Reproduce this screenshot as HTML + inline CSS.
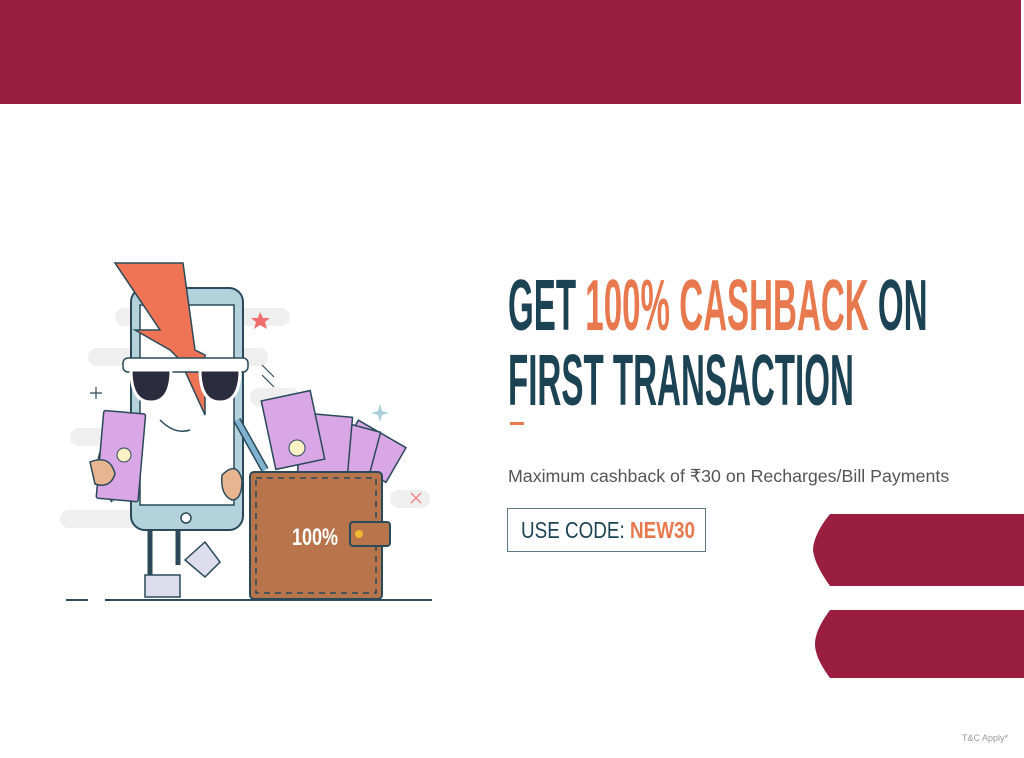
<!DOCTYPE html>
<html><head><meta charset="utf-8"><style>
body{margin:0;width:1024px;height:758px;background:#fff;position:relative;overflow:hidden;font-family:"Liberation Sans",sans-serif}
.top{position:absolute;left:0;top:0;width:1021px;height:104px;background:#991e40}
.h{position:absolute;left:508px;font-family:"Liberation Sans",sans-serif;font-weight:bold;font-size:72px;line-height:72px;color:#1c4354;transform-origin:0 0;white-space:nowrap;transform:scaleX(0.46)}
.o{color:#e8784d}
.sub{position:absolute;left:508px;top:466px;font-size:17.8px;color:#555;white-space:nowrap}
.code{position:absolute;left:507px;top:508px;width:197px;height:42px;border:1.5px solid #5d7a87;font-size:23px;line-height:42px;color:#1c4354;white-space:nowrap;overflow:hidden}
.code span.in{display:inline-block;transform:scaleX(0.82);transform-origin:0 0;margin-left:13px}
.tc{position:absolute;right:16px;top:733px;font-size:9px;color:#999}
</style></head><body>
<div class="top"></div>
<div class="h" style="top:270px">GET <span class="o">100% CASHBACK</span> ON</div>
<div class="h" style="top:345px">FIRST TRANSACTION</div>
<div style="position:absolute;left:510px;top:422px;width:14px;height:3px;background:#e8784d"></div>
<div class="sub">Maximum cashback of ₹30 on Recharges/Bill Payments</div>
<div class="code"><span class="in">USE CODE: <span style="color:#e8784d;font-weight:bold">NEW30</span></span></div>
<svg style="position:absolute;left:0;top:0" width="1024" height="758">
<path d="M830 514H1024V586H830C820 572 814 560 813 550C813 540 820 526 830 514Z" fill="#991e40"/>
<path d="M830 610H1024V678H830C821 666 815 654 815 644C815 634 821 622 830 610Z" fill="#991e40"/>
<g fill="#efefef">
<rect x="115" y="308" width="175" height="18" rx="9"/>
<rect x="88" y="348" width="180" height="18" rx="9"/>
<rect x="70" y="428" width="150" height="18" rx="9"/>
<rect x="60" y="510" width="180" height="18" rx="9"/>
<rect x="250" y="388" width="50" height="18" rx="9"/>
<rect x="390" y="490" width="40" height="18" rx="9"/>
</g>
<line x1="66" y1="600" x2="88" y2="600" stroke="#2a4a5a" stroke-width="2"/>
<line x1="105" y1="600" x2="432" y2="600" stroke="#2a4a5a" stroke-width="2"/>
<path d="M105 450 Q95 470 115 500" stroke="#2a4a5a" stroke-width="9" fill="none"/>
<path d="M105 450 Q95 470 115 500" stroke="#7fb3cf" stroke-width="6" fill="none"/>
<rect x="131" y="288" width="112" height="242" rx="14" fill="#b4d2dc" stroke="#2a4a5a" stroke-width="2"/>
<rect x="140" y="305" width="94" height="200" fill="#fff" stroke="#2a4a5a" stroke-width="1.5"/>
<circle cx="186" cy="518" r="5" fill="#fff" stroke="#2a4a5a" stroke-width="1.5"/>
<path d="M150 530V575M178 530V565" stroke="#2a4a5a" stroke-width="5"/>
<path d="M145 575h35v22h-35z" fill="#dde" stroke="#2a4a5a" stroke-width="1.5"/>
<path d="M185 560l20-18 15 20-15 15z" fill="#dde" stroke="#2a4a5a" stroke-width="1.5"/>
<path d="M115 263L183 263 195 350 205 355 205 415 180 360 170 350 135 330 160 330 Z" fill="#ee7455" stroke="#2a4a5a" stroke-width="1.5"/>
<rect x="123" y="358" width="125" height="14" rx="5" fill="#fff" stroke="#2a4a5a" stroke-width="1.5"/>
<path d="M131 370h40q0 32-20 32t-20-32zM200 370h40q0 32-20 32t-20-32z" fill="#2a2b3c" stroke="#fff" stroke-width="3"/>
<path d="M160 420q15 15 30 10" stroke="#2a4a5a" stroke-width="1.5" fill="none"/>
<path d="M237 420L265 470" stroke="#2a4a5a" stroke-width="8"/>
<path d="M237 420L265 470" stroke="#7fb3cf" stroke-width="5"/>
<rect x="100" y="412" width="42" height="88" rx="2" transform="rotate(5 120 455)" fill="#d9a6e6" stroke="#2a4a5a" stroke-width="1.5"/>
<circle cx="124" cy="455" r="7" fill="#fbf1c6" stroke="#2a4a5a"/>
<path d="M90 462q20 -8 25 12q-5 15 -20 10z" fill="#e8b591" stroke="#2a4a5a" stroke-width="1.5"/>
<path d="M222 475q15 -15 20 5q0 20 -10 20q-12 -5 -10 -25z" fill="#e8b591" stroke="#2a4a5a" stroke-width="1.5"/>
<g stroke="#2a4a5a" stroke-width="1.5" fill="#d9a6e6">
<rect x="345" y="430" width="55" height="40" transform="rotate(30 370 450)"/>
<rect x="330" y="425" width="45" height="55" transform="rotate(15 350 450)"/>
<rect x="300" y="415" width="50" height="60" transform="rotate(5 325 445)"/>
<rect x="268" y="395" width="50" height="70" transform="rotate(-12 293 430)"/>
</g>
<circle cx="297" cy="448" r="8" fill="#fbf1c6" stroke="#2a4a5a"/>
<rect x="250" y="472" width="132" height="127" rx="4" fill="#b8744a" stroke="#2a4a5a" stroke-width="2"/>
<rect x="256" y="478" width="120" height="115" fill="none" stroke="#2a4a5a" stroke-width="1.5" stroke-dasharray="6 5"/>
<rect x="350" y="522" width="40" height="24" rx="3" fill="#b8744a" stroke="#2a4a5a" stroke-width="2"/>
<circle cx="359" cy="534" r="4" fill="#f2b731"/>
<text x="292" y="545" font-family="Liberation Sans,sans-serif" font-weight="bold" font-size="24" fill="#fff" transform="translate(292 0) scale(0.75 1) translate(-292 0)">100%</text>
<path d="M260 312l3 6 7 0-5 4 2 7-7-4-6 4 2-7-5-4 7 0z" fill="#ee6e6e"/>
<path d="M380 404l2 7 7 2-7 2-2 7-2-7-7-2 7-2z" fill="#a9cfd8"/>
<path d="M90 393h12M96 387v12" stroke="#2a4a5a" stroke-width="1.2"/>
<path d="M411 493l10 10M421 493l-10 10" stroke="#e88" stroke-width="1.5"/>
<path d="M262 365l12 12M262 375l12 12" stroke="#2a4a5a" stroke-width="1.2"/>
</svg>
<div class="tc">T&amp;C Apply*</div>
</body></html>
